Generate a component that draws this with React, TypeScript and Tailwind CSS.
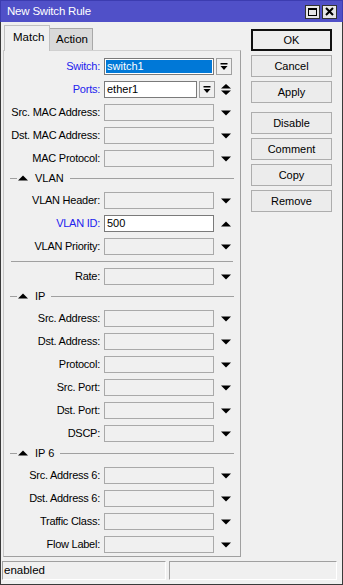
import React from "react";

const FONT = { fontFamily: '"Liberation Sans", Arial, sans-serif' };

function TriDown() {
  return (
    <svg width="10" height="6" viewBox="0 0 10 6" className="block">
      <polygon points="0,0.5 10,0.5 5,5.5" fill="#000" />
    </svg>
  );
}
function TriUp() {
  return (
    <svg width="10" height="6" viewBox="0 0 10 6" className="block">
      <polygon points="0,5.5 10,5.5 5,0.5" fill="#000" />
    </svg>
  );
}
function UpDown() {
  return (
    <svg width="10" height="11" viewBox="0 0 10 11" className="block">
      <polygon points="0,4.5 10,4.5 5,0" fill="#000" />
      <polygon points="0,6.5 10,6.5 5,11" fill="#000" />
    </svg>
  );
}
function ComboBtn() {
  return (
    <div className="w-[16px] h-[17px] border border-[#a0a0a0] bg-[#f0f0f0] flex items-center justify-center">
      <svg width="8" height="8" viewBox="0 0 8 8" className="block">
        <rect x="0.5" y="0" width="7" height="1.5" fill="#000" />
        <polygon points="0.5,3 7.5,3 4,7" fill="#000" />
      </svg>
    </div>
  );
}

type Kind = "dis" | "switch" | "ports" | "vlanid";

function Row({ label, kind = "dis", blue = false }: { label: string; kind?: Kind; blue?: boolean }) {
  return (
    <div className="h-[23px] flex items-center">
      <div
        className={`w-[96px] text-right text-[11px] leading-none whitespace-nowrap tracking-[-0.25px] ${blue ? "text-[#2222ee]" : "text-black"}`}
      >
        {label}
      </div>
      {kind === "dis" && (
        <>
          <div className="ml-[4px] w-[110px] h-[17px] border border-[#a9a9a9] bg-[#f0f0f0]" />
          <div className="ml-[7px]">
            <TriDown />
          </div>
        </>
      )}
      {kind === "switch" && (
        <>
          <div className="ml-[4px] w-[110px] h-[17px] border border-[#7a7a7a] bg-white p-[1px]">
            <div className="h-full bg-[#0078d7] text-white text-[11px] leading-[13px] pl-[1px]">switch1</div>
          </div>
          <div className="ml-[2px]">
            <ComboBtn />
          </div>
        </>
      )}
      {kind === "ports" && (
        <>
          <div className="ml-[4px] w-[93px] h-[17px] border border-[#7a7a7a] bg-white text-[11px] leading-[15px] pl-[2px]">
            ether1
          </div>
          <div className="ml-[2px]">
            <ComboBtn />
          </div>
          <div className="ml-[6px]">
            <UpDown />
          </div>
        </>
      )}
      {kind === "vlanid" && (
        <>
          <div className="ml-[4px] w-[110px] h-[17px] border border-[#7a7a7a] bg-white text-[11px] leading-[15px] pl-[2px]">
            500
          </div>
          <div className="ml-[7px]">
            <TriUp />
          </div>
        </>
      )}
    </div>
  );
}

function Header({ title }: { title: string }) {
  return (
    <div className="h-[19px] flex items-center pb-[3px]">
      <div className="ml-[6px] w-[7px] h-px bg-[#a0a0a0]" />
      <div className="ml-[1px]">
        <TriUp />
      </div>
      <div className="ml-[7px] text-[11px] leading-none text-black">{title}</div>
      <div className="ml-[6px] mr-[6px] flex-1 h-px bg-[#a0a0a0]" />
    </div>
  );
}

function Btn({ label, def = false }: { label: string; def?: boolean }) {
  return (
    <div
      className={`w-[81px] h-[22px] flex items-center justify-center text-[11px] text-black ${
        def ? "border-2 border-[#111] bg-[#eeeeee]" : "border border-[#adadad] bg-[#ececec]"
      }`}
    >
      {label}
    </div>
  );
}

export default function App() {
  return (
    <div className="w-[343px] h-[585px] flex flex-col bg-[#f0f0f0] overflow-hidden" style={FONT}>
      {/* Title bar */}
      <div className="h-[22px] bg-[#5050c8] flex items-center border-t border-[#3c3cb0] border-x border-x-[#3c3cb0]">
        <div className="pl-[6px] text-white text-[11.5px] tracking-[-0.2px] leading-none flex-1">New Switch Rule</div>
        <div className="flex gap-[2px] mr-[5px]">
          <div className="w-[15px] h-[14px] bg-[#e6e6e6] border border-[#333] flex items-center justify-center">
            <div className="w-[9px] h-[8px] border border-black border-t-2" />
          </div>
          <div className="w-[15px] h-[14px] bg-[#e6e6e6] border border-[#333] flex items-center justify-center">
            <svg width="9" height="9" viewBox="0 0 9 9" className="block">
              <path d="M1 1 L8 8 M8 1 L1 8" stroke="#000" strokeWidth="2" />
            </svg>
          </div>
        </div>
      </div>

      {/* Body */}
      <div className="flex-1 flex flex-col border-x border-b border-[#3a3a3a]">
        <div className="flex">
          {/* Left column */}
          <div className="w-[240px] flex flex-col">
            {/* Tabs */}
            <div className="h-[28px] flex items-end pl-[3px]">
              <div className="w-[46px] h-[26px] border-t border-l border-r border-[#c0c0c0] bg-[#f0f0f0] text-[11.5px] leading-none flex items-center pl-[8px] pb-[2px] relative top-px z-10">
                Match
              </div>
              <div className="w-[43px] h-[22px] border-t border-r border-[#a8a8a8] bg-[#d9d9d9] text-[11.5px] leading-none flex items-center pl-[6px]">
                Action
              </div>
            </div>
            {/* Panel */}
            <div className="ml-[2px] w-[238px] h-[507px] border border-[#a0a0a0] border-t-[#d0d0d0] border-l-[#c8c8c8] pt-[4px]">
              <Row label="Switch:" kind="switch" blue />
              <Row label="Ports:" kind="ports" blue />
              <Row label="Src. MAC Address:" />
              <Row label="Dst. MAC Address:" />
              <Row label="MAC Protocol:" />
              <Header title="VLAN" />
              <Row label="VLAN Header:" />
              <Row label="VLAN ID:" kind="vlanid" blue />
              <Row label="VLAN Priority:" />
              <div className="h-[7px] pt-[3px] px-[7px]">
                <div className="h-px bg-[#a0a0a0]" />
              </div>
              <Row label="Rate:" />
              <Header title="IP" />
              <Row label="Src. Address:" />
              <Row label="Dst. Address:" />
              <Row label="Protocol:" />
              <Row label="Src. Port:" />
              <Row label="Dst. Port:" />
              <Row label="DSCP:" />
              <Header title="IP 6" />
              <Row label="Src. Address 6:" />
              <Row label="Dst. Address 6:" />
              <Row label="Traffic Class:" />
              <Row label="Flow Label:" />
            </div>
          </div>
          {/* Right column */}
          <div className="ml-[10px] mt-[7px] flex flex-col">
            <Btn label="OK" def />
            <div className="h-[4px]" />
            <Btn label="Cancel" />
            <div className="h-[4px]" />
            <Btn label="Apply" />
            <div className="h-[9px]" />
            <Btn label="Disable" />
            <div className="h-[4px]" />
            <Btn label="Comment" />
            <div className="h-[4px]" />
            <Btn label="Copy" />
            <div className="h-[4px]" />
            <Btn label="Remove" />
          </div>
        </div>
        {/* Status bar */}
        <div className="mt-[4px] ml-[1px] flex h-[19px]">
          <div className="w-[164px] h-full border border-[#a0a0a0] border-b-white border-r-white text-[11.5px] leading-none flex items-center pl-[1px]">
            enabled
          </div>
          <div className="ml-[3px] w-[168px] h-full border border-[#a0a0a0] border-b-white border-r-white" />
        </div>
      </div>
    </div>
  );
}
